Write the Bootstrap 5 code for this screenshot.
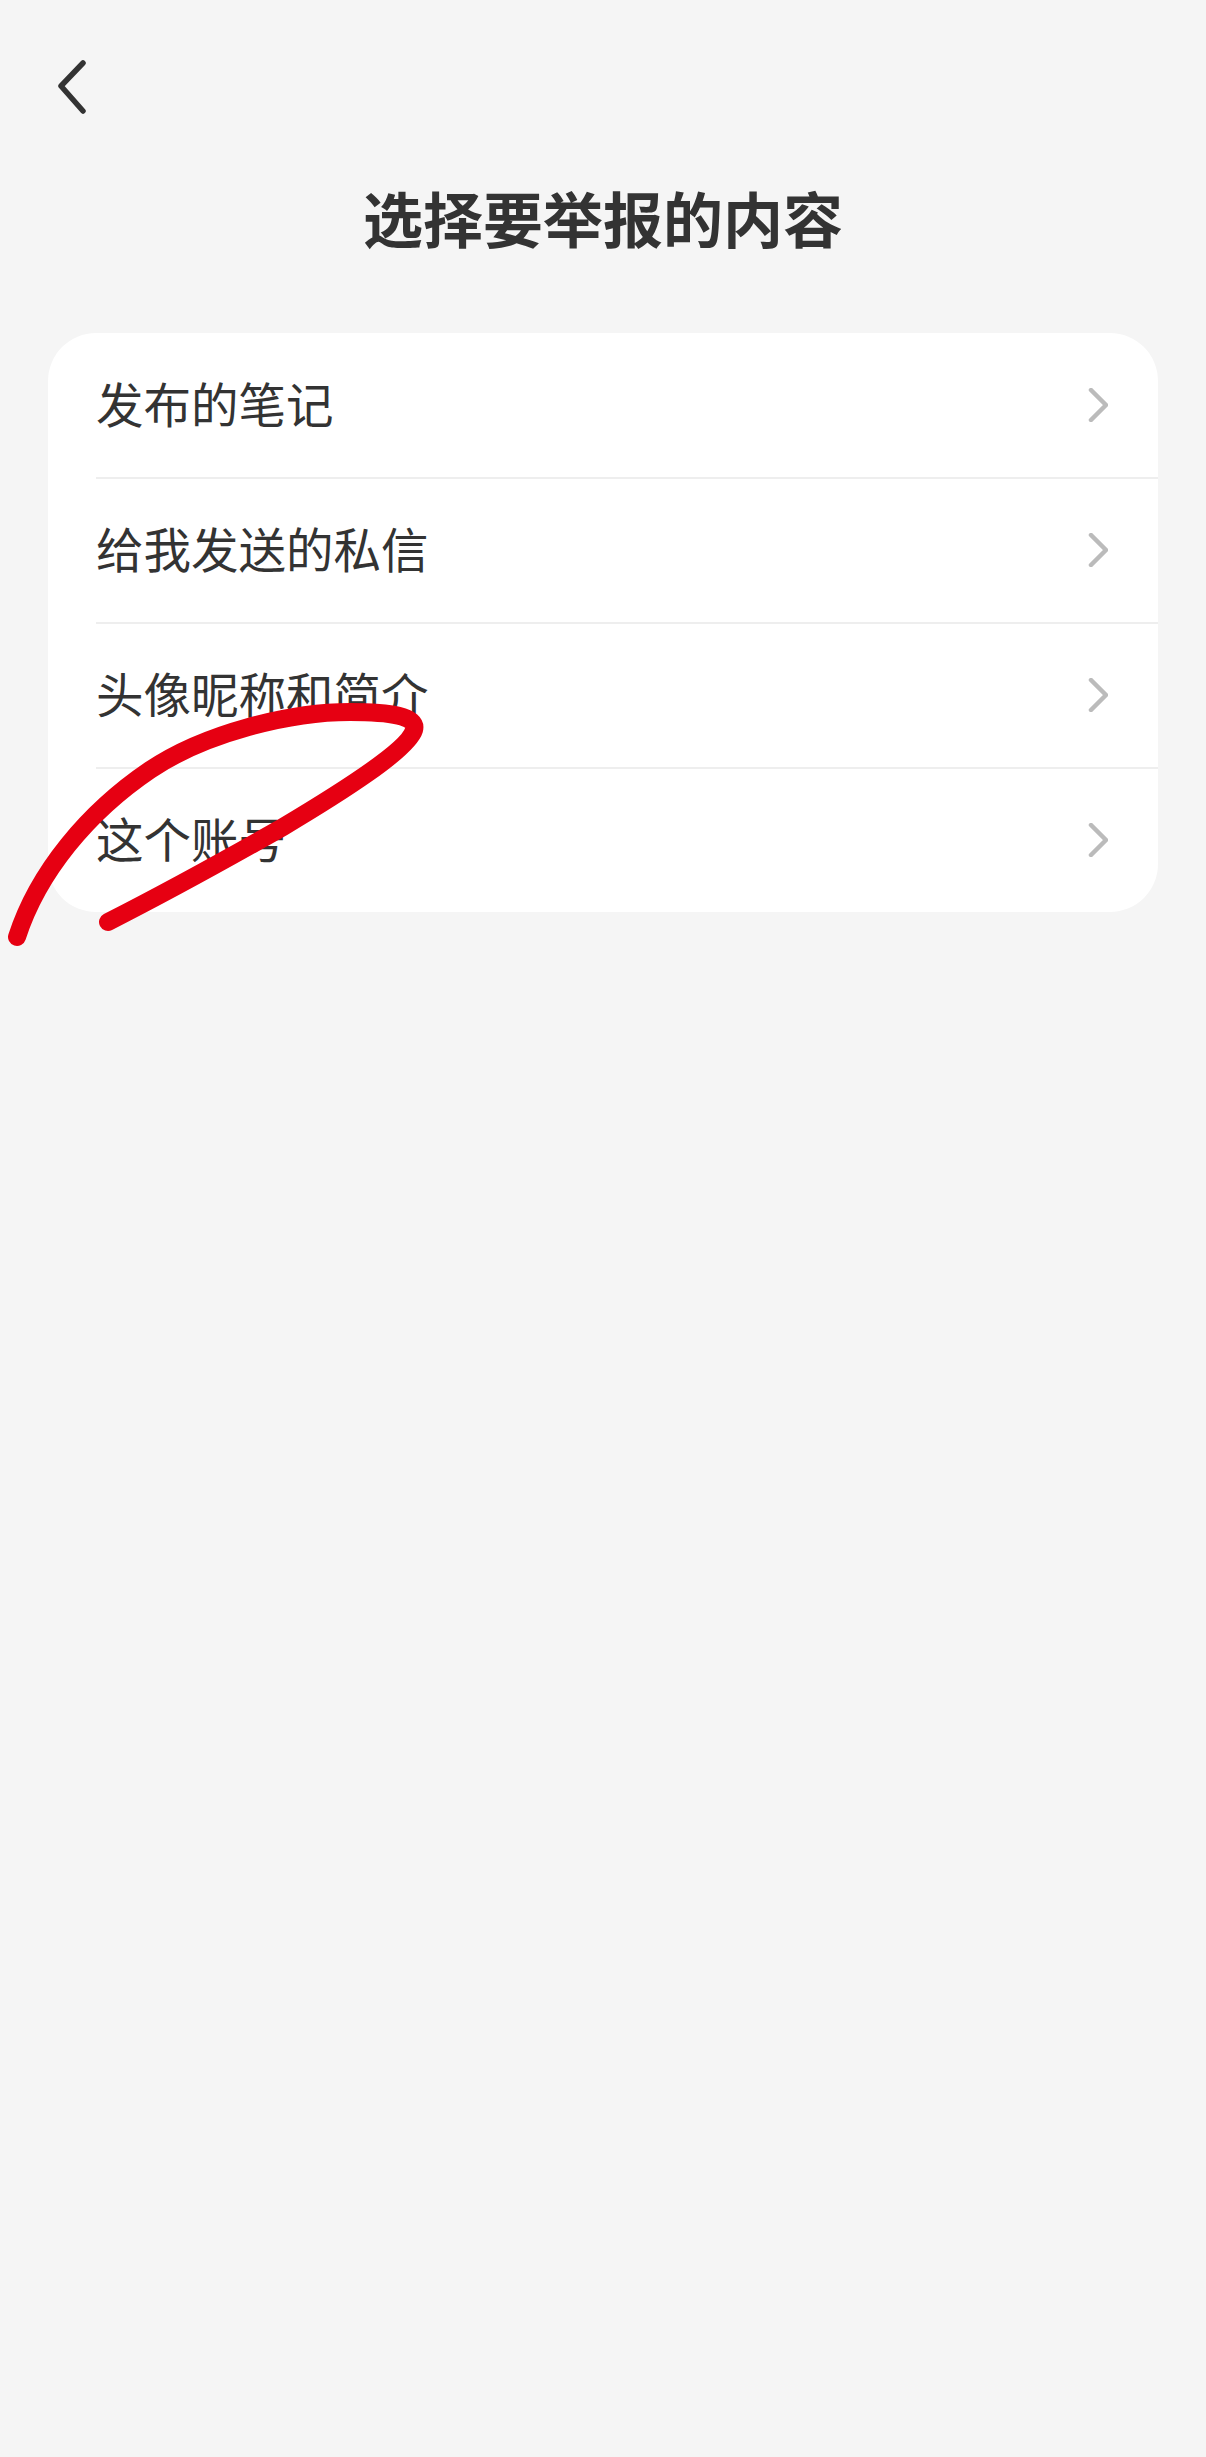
<!DOCTYPE html>
<html lang="zh-CN">
<head>
    <meta charset="UTF-8">
    <title>选择要举报的内容</title>
    <link rel="stylesheet" href="https://cdn.jsdelivr.net/npm/bootstrap@5.3.0/dist/css/bootstrap.min.css">
    <style>
        html, body { height: 100%; }
        body { background: #f5f5f5; color: #333; font-family: "Noto Sans CJK SC", "Liberation Sans", sans-serif; position: relative; overflow: hidden; }
        .back-bar { height: 172px; padding: 60px 0 0 58px; }
        .back-bar svg { display: block; }
        .page-title { font-size: 60px; line-height: 90px; font-weight: 700; color: #333; margin: 0 0 71px; }
        .report-card { margin: 0 48px; background: #fff; border-radius: 48px; overflow: hidden; }
        .report-row { height: 145px; margin-left: 48px; padding-right: 50px; font-size: 47.5px; color: #333; }
        .report-row:first-child { height: 144px; }
        .report-row + .report-row { border-top: 2px solid #eeeeee; }
        .report-row span { margin-bottom: 5px; }
        .report-row svg { margin-bottom: 1px; }
        .scribble { position: absolute; left: 0; top: 0; pointer-events: none; }
    </style>
</head>
<body>

<!-- top bar -->
<div class="back-bar">
    <svg width="30" height="56" viewBox="0 0 30 56" fill="none" stroke="#333" stroke-width="5.5" stroke-linecap="round" stroke-linejoin="round">
        <path d="M25 3 L3 26 L25 51"/>
    </svg>
</div>

<h1 class="page-title text-center">选择要举报的内容</h1>

<!-- list -->
<div class="report-card">
    <div class="report-row d-flex align-items-center justify-content-between">
        <span>发布的笔记</span>
        <svg width="20" height="34" viewBox="0 0 20 34" fill="none" stroke="#bbb" stroke-width="4.5" stroke-linecap="round" stroke-linejoin="round"><path d="M3 2 L18 17 L3 32"/></svg>
    </div>
    <div class="report-row d-flex align-items-center justify-content-between">
        <span>给我发送的私信</span>
        <svg width="20" height="34" viewBox="0 0 20 34" fill="none" stroke="#bbb" stroke-width="4.5" stroke-linecap="round" stroke-linejoin="round"><path d="M3 2 L18 17 L3 32"/></svg>
    </div>
    <div class="report-row d-flex align-items-center justify-content-between">
        <span>头像昵称和简介</span>
        <svg width="20" height="34" viewBox="0 0 20 34" fill="none" stroke="#bbb" stroke-width="4.5" stroke-linecap="round" stroke-linejoin="round"><path d="M3 2 L18 17 L3 32"/></svg>
    </div>
    <div class="report-row d-flex align-items-center justify-content-between">
        <span>这个账号</span>
        <svg width="20" height="34" viewBox="0 0 20 34" fill="none" stroke="#bbb" stroke-width="4.5" stroke-linecap="round" stroke-linejoin="round"><path d="M3 2 L18 17 L3 32"/></svg>
    </div>
</div>

<!-- red pen mark over the list -->
<svg class="scribble" width="1206" height="1000" viewBox="0 0 1206 1000" fill="none">
    <path d="M17 937 C38 872 88 812 150 770 C205 733 290 712 350 712 C390 712 418 716 414 730 C408 750 340 793 283 827 C225 860 165 893 108 922" stroke="#e60012" stroke-width="18" stroke-linecap="round" stroke-linejoin="round"/>
</svg>

<script src="https://cdn.jsdelivr.net/npm/bootstrap@5.3.0/dist/js/bootstrap.bundle.min.js"></script>
</body>
</html>
